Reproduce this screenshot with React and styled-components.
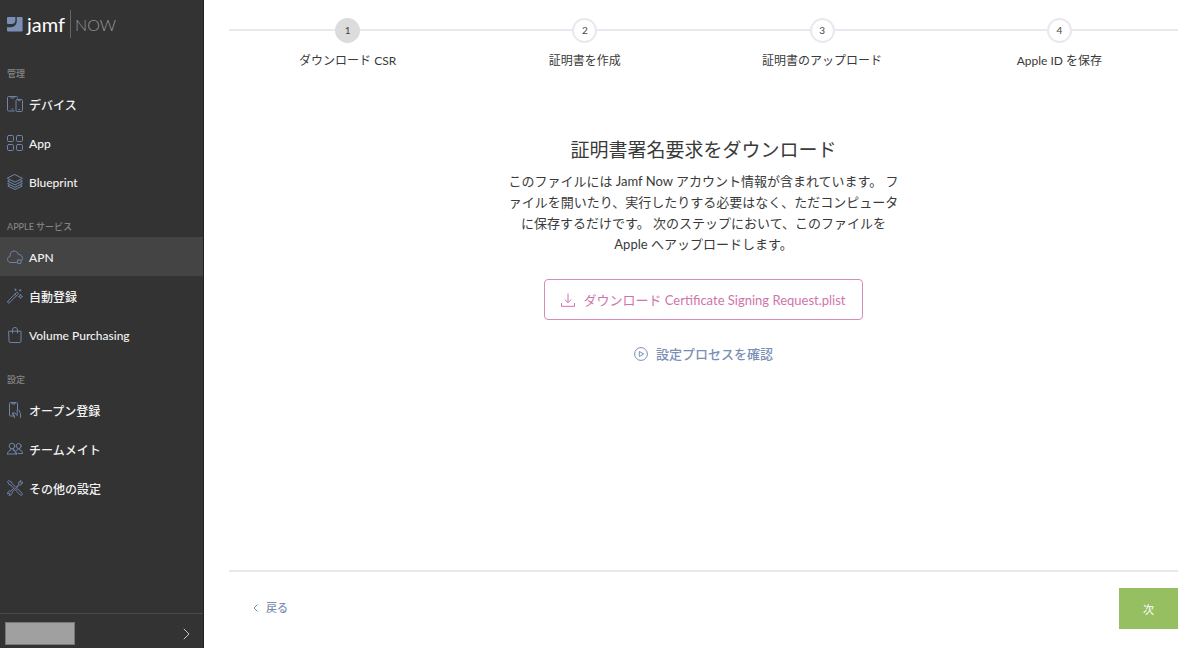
import React from 'react'
import styled, { createGlobalStyle } from 'styled-components';

const menu = [
  {
    title: '管理',
    items: [
      { label: 'デバイス', icon: 'devices' },
      { label: 'App', icon: 'apps' },
      { label: 'Blueprint', icon: 'layers' },
    ],
  },
  {
    title: 'APPLE サービス',
    items: [
      { label: 'APN', icon: 'cloud', active: true },
      { label: '自動登録', icon: 'wand' },
      { label: 'Volume Purchasing', icon: 'bag' },
    ],
  },
  {
    title: '設定',
    items: [
      { label: 'オープン登録', icon: 'touch' },
      { label: 'チームメイト', icon: 'team' },
      { label: 'その他の設定', icon: 'tools' },
    ],
  },
];

const steps = ['ダウンロード CSR', '証明書を作成', '証明書のアップロード', 'Apple ID を保存'];

const icons = {
  devices: (
    <>
      <path d="M7.5 15H1.6Q.5 15 .5 13.9V1.6Q.5 .5 1.6 .5H9.4Q10.5 .5 10.5 1.6V2M3.5 .7Q3.5 2 4.4 2H6.6Q7.5 2 7.5 .7" />
      <rect x="9" y="3.5" width="6.5" height="12" rx="1.2" />
      <path d="M11 3.6Q11 5 12.2 5T13.5 3.6M11.8 13.5H12.8M5 13H6" />
    </>
  ),
  apps: (
    <>
      <rect x=".5" y=".5" width="6" height="6" rx="1.2" />
      <rect x="9.5" y=".5" width="6" height="6" rx="1.2" />
      <rect x=".5" y="9.5" width="6" height="6" rx="1.2" />
      <rect x="9.5" y="9.5" width="6" height="6" rx="1.2" />
    </>
  ),
  layers: (
    <>
      <path d="M8 .6L15.4 4.4L8 8.2L.6 4.4Z" />
      <path d="M2.3 6.2L.6 7.1L8 10.9L15.4 7.1L13.7 6.2" />
      <path d="M2.3 8.8L.6 9.7L8 13.3L15.4 9.7L13.7 8.8" />
      <path d="M2.3 11.3L.8 12.1L8 15.5L15.2 12.1L13.7 11.3" />
    </>
  ),
  cloud: (
    <>
      <path d="M9.5 13.5H3.6C1.8 13.5 .5 12.1 .5 10.4C.5 8.8 1.6 7.6 3.1 7.3C2.6 4.3 4.5 2 7 2C9.2 2 10.9 3.3 11.3 5.4C13.6 5.4 15.4 7 15.5 9.3" />
      <rect x="10.5" y="11" width="3.5" height="3.5" rx=".6" />
      <path d="M14 11.5L15.5 10.5" />
    </>
  ),
  wand: (
    <>
      <path d="M.9 13.2L9.5 4.6Q10.3 4 11 4.7T11 6.2L2.4 14.8Q1.7 15.4 1 14.7T.9 13.2ZM7.9 6.2L9.4 7.7" />
      <path d="M13.5 6.5Q13.7 8.3 15.5 8.5Q13.7 8.7 13.5 10.5Q13.3 8.7 11.5 8.5Q13.3 8.3 13.5 6.5ZM8.5 1V2.5M7.8 1.8H9.2M13.2 1.6V3M12.5 2.3H13.9" />
    </>
  ),
  bag: (
    <>
      <path d="M2 4.2H14V14.3Q14 15.5 12.8 15.5H3.2Q2 15.5 2 14.3Z" />
      <path d="M5.5 6V3C5.5 1.5 6.5 .5 8 .5S10.5 1.5 10.5 3V6" />
    </>
  ),
  touch: (
    <>
      <path d="M5.5 14H3.5Q2.5 14 2.5 13V1.5Q2.5 .5 3.5 .5H9.5Q10.5 .5 10.5 1.5V8M5 .7V2H8V.7" />
      <path d="M5.8 10.5Q5 11 5.5 12L7.5 15.5M7.5 15.5L6.5 11.2Q7.2 10 8 11L10.2 13.5V8Q11.2 7 12 8.5L13.5 11.5V15.5" />
    </>
  ),
  team: (
    <>
      <circle cx="5" cy="5" r="2.8" />
      <circle cx="11.7" cy="5" r="2.5" />
      <path d="M.5 13C.5 10.5 1.5 10 3.8 9.3V7.7M6.2 7.7V9.3C8.7 10 9.5 10.5 9.5 13ZM.5 13H9.5M10.9 7.5V8.8L9.5 9.5M12.6 7.5V9C14.7 9.6 15.5 10.2 15.5 12.5H11" />
    </>
  ),
  tools: (
    <>
      <path d="M9 7.3L11.8 4.5C11.2 2.3 12.5 .8 14.2 .6L12.9 2.2L14 3.3L15.5 1.9C15.7 3.8 14.2 5.2 12.6 4.9L5 12.2C5.3 14 4 15.6 1.9 15.4L3.2 14L2.2 12.8L.6 14C.4 12 1.9 10.4 3.9 11L7 8.2" />
      <path d="M3.5 5L2 4.5L.6 1.5L1.5 .6L4.5 2L5 3.5L8.2 6.7M3.5 5L6.7 8.2M9.2 10.2L10.5 8.8L15 13.2Q15.6 14.4 15 15Q14.3 15.6 13.3 15L9.2 10.9Z" />
    </>
  ),
};

const App = () => {
  return (
    <Page>
      <GlobalStyle />
      <Sidebar>
        <Brand>
          <Logo viewBox="0 0 16 15" aria-hidden="true">
            <path d="M1 0H8.4V2.8C8.4 5.8 7.2 7 4.4 7H1Q0 7 0 6V1Q0 0 1 0Z" />
            <path d="M9.8 0H14.6Q15.6 0 15.6 1V13.6Q15.6 14.6 14.6 14.6H1Q0 14.6 0 13.6V10.2H4C8 9.9 9.8 7.4 9.8 3.6Z" />
          </Logo>
          <BrandName>jamf</BrandName>
          <Product>NOW</Product>
        </Brand>
        <Nav>
          {menu.map((group) => (
            <section key={group.title}>
              <GroupTitle>{group.title}</GroupTitle>
              {group.items.map((item) => (
                <MenuItem href="#" key={item.label} $active={item.active}>
                  <MenuIcon viewBox="0 0 16 16" aria-hidden="true">{icons[item.icon]}</MenuIcon>
                  <span>{item.label}</span>
                </MenuItem>
              ))}
            </section>
          ))}
        </Nav>
        <Account type="button" aria-label="アカウント">
          <AccountName />
          <Chevron viewBox="0 0 7 12" aria-hidden="true">
            <path d="M.8 .8L6 6L.8 11.2" />
          </Chevron>
        </Account>
      </Sidebar>

      <Main>
        <Stepper>
          {steps.map((step, i) => (
            <Step key={step}>
              <StepNumber $current={i === 0}>{i + 1}</StepNumber>
              <StepLabel>{step}</StepLabel>
            </Step>
          ))}
        </Stepper>

        <Content>
          <Title>証明書署名要求をダウンロード</Title>
          <Description>
            このファイルには Jamf Now アカウント情報が含まれています。 ファイルを開いたり、実行したりする必要はなく、ただコンピュータに保存するだけです。 次のステップにおいて、このファイルを Apple へアップロードします。
          </Description>
          <DownloadButton type="button">
            <LineIcon viewBox="0 0 14 14" aria-hidden="true">
              <path d="M7 .5V9.5M3.8 6.5L7 9.7L10.2 6.5M.5 10V13.3H13.5V10" />
            </LineIcon>
            <span>ダウンロード Certificate Signing Request.plist</span>
          </DownloadButton>
          <ProcessLink href="#">
            <LineIcon viewBox="0 0 14 14" aria-hidden="true">
              <circle cx="7" cy="7" r="6.4" />
              <path d="M5.3 4.5L9.7 7L5.3 9.5Z" />
            </LineIcon>
            <span>設定プロセスを確認</span>
          </ProcessLink>
        </Content>

        <Footer>
          <BackLink href="#">
            <BackIcon viewBox="0 0 5 8" aria-hidden="true">
              <path d="M4.5 .5L1 4L4.5 7.5" />
            </BackIcon>
            戻る
          </BackLink>
          <NextButton type="button">次</NextButton>
        </Footer>
      </Main>
    </Page>
  )
}


const GlobalStyle = createGlobalStyle`
  * {
    box-sizing: border-box;
  }

  body {
    margin: 0;
    background: #fff;
    color: #3a3a3a;
    font-family: Lato, "Noto Sans CJK JP", sans-serif;
    font-size: 13px;
  }

  a {
    text-decoration: none;
  }

  button {
    font-family: inherit;
    cursor: pointer;
  }
`;

const Page = styled.div`
  display: flex;
  min-height: 100vh;
`;

const Sidebar = styled.aside`
  display: flex;
  flex-direction: column;
  flex: 0 0 204px;
  background: #333;
  border-right: 1px solid #222;
`;

const Brand = styled.div`
  display: flex;
  align-items: center;
  height: 48px;
  padding-left: 7px;
`;

const Logo = styled.svg`
  width: 16px;
  height: 15px;
  fill: #7b8fb5;
`;

const BrandName = styled.span`
  margin-left: 4px;
  padding-right: 5px;
  color: #fff;
  font-size: 20px;
  line-height: 28px;
  border-right: 1px solid #666;
`;

const Product = styled.span`
  margin-left: 4px;
  color: #999;
  font-size: 16px;
  font-weight: 300;
`;

const Nav = styled.nav`
  flex: 1;
`;

const GroupTitle = styled.h2`
  height: 36px;
  margin: 0;
  padding: 18px 7px 0;
  color: #858585;
  font-size: 9px;
  font-weight: 500;
  line-height: 16px;
`;

const MenuItem = styled.a`
  display: flex;
  align-items: center;
  gap: 6px;
  height: 39px;
  padding: 0 7px;
  color: #f2f2f2;
  font-size: 12px;
  font-weight: 500;
  background: ${(props) => (props.$active ? '#444' : 'transparent')};

  span {
    padding-top: 2px;
  }
`;

const MenuIcon = styled.svg`
  width: 16px;
  height: 16px;
  fill: none;
  stroke: #6f84a8;
  stroke-linecap: round;
  stroke-linejoin: round;
`;

const Account = styled.button`
  display: flex;
  align-items: center;
  justify-content: space-between;
  height: 35px;
  padding: 5px 13px 0 5px;
  background: none;
  border: 0;
  border-top: 1px solid #4a4a4a;
`;

const AccountName = styled.span`
  width: 70px;
  height: 23px;
  background: #a0a0a0;
  border: 1px solid #777;
`;

const Chevron = styled.svg`
  width: 7px;
  height: 12px;
  fill: none;
  stroke: #c8c8c8;
`;

const Main = styled.main`
  display: flex;
  flex-direction: column;
  flex: 1;
  padding: 18px 22px 0 25px;
`;

const Stepper = styled.ol`
  display: flex;
  margin: 0;
  padding: 0;
  list-style: none;
`;

const Step = styled.li`
  display: flex;
  flex-direction: column;
  align-items: center;
  flex: 1;
  background: linear-gradient(#e8e8ee, #e8e8ee) 0 11px / 100% 2px no-repeat;
`;

const StepNumber = styled.span`
  width: 25px;
  height: 25px;
  color: #444;
  font-size: 10px;
  line-height: 21px;
  text-align: center;
  background: ${(props) => (props.$current ? '#dcdcdc' : '#fff')};
  border: 2px solid ${(props) => (props.$current ? '#dcdcdc' : '#e8e8ee')};
  border-radius: 50%;
`;

const StepLabel = styled.span`
  margin-top: 8px;
  font-size: 12px;
  line-height: 20px;
`;

const Content = styled.div`
  display: flex;
  flex-direction: column;
  align-items: center;
  flex: 1;
  padding-top: 64px;
`;

const Title = styled.h1`
  margin: 0 0 6px;
  font-size: 19px;
  font-weight: 400;
  line-height: 30px;
`;

const Description = styled.p`
  max-width: 396px;
  margin: 0;
  line-height: 21px;
  text-align: center;
`;

const DownloadButton = styled.button`
  display: flex;
  align-items: center;
  gap: 8px;
  height: 41px;
  margin-top: 24px;
  padding: 0 16px;
  color: #cf74ab;
  font-size: 13px;
  background: #fff;
  border: 1px solid #d78bb9;
  border-radius: 4px;
`;

const LineIcon = styled.svg`
  width: 14px;
  height: 14px;
  fill: none;
  stroke: currentColor;
`;

const ProcessLink = styled.a`
  display: flex;
  align-items: center;
  gap: 8px;
  margin-top: 24px;
  color: #7b8fb5;
  font-weight: 500;
  line-height: 20px;
`;

const Footer = styled.footer`
  display: flex;
  align-items: flex-start;
  justify-content: space-between;
  height: 78px;
  padding-top: 16px;
  border-top: 2px solid #e8e8ec;
`;

const BackLink = styled.a`
  display: flex;
  align-items: center;
  gap: 8px;
  padding-left: 24px;
  color: #7b8fb5;
  font-size: 11px;
  font-weight: 500;
  line-height: 40px;
`;

const BackIcon = styled.svg`
  width: 5px;
  height: 8px;
  fill: none;
  stroke: currentColor;
`;

const NextButton = styled.button`
  width: 59px;
  height: 41px;
  color: #fff;
  font-size: 11px;
  background: #96bf62;
  border: 0;
`;


export default App
